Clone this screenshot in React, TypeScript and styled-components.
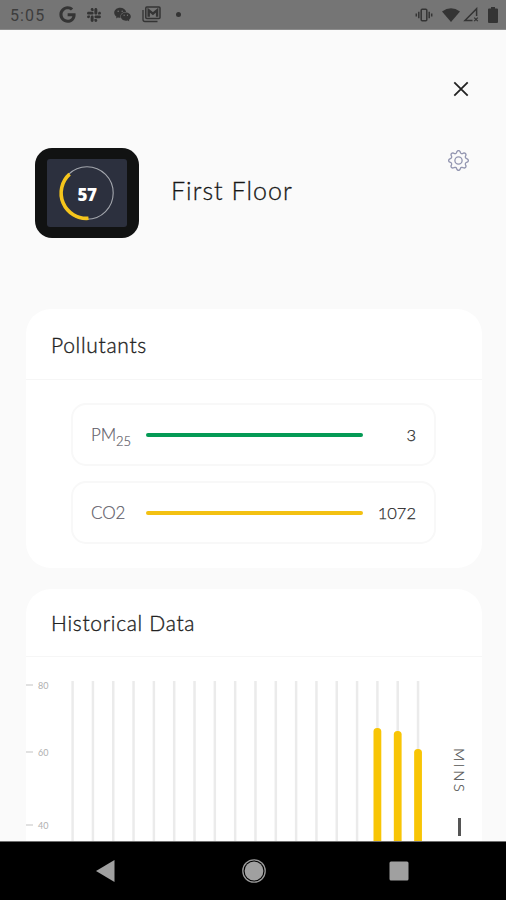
import React from "react";
import styled, { createGlobalStyle } from "styled-components";
import { FaGoogle, FaSlack } from "react-icons/fa";
import { AiFillWechat } from "react-icons/ai";
import { BsGear } from "react-icons/bs";

const GlobalStyle = createGlobalStyle`
  *, *::before, *::after { box-sizing: border-box; }
  body { margin: 0; background: #fafafa; font-family: Lato, "Open Sans", sans-serif; }
`;

const Screen = styled.div`
  width: 506px;
  height: 900px;
  display: flex;
  flex-direction: column;
  overflow: hidden;
  background: #fafafa;
`;

const StatusBar = styled.header`
  flex: none;
  height: 30px;
  padding: 0 8px 0 10px;
  display: flex;
  justify-content: space-between;
  align-items: center;
  background: #757575;
  border-bottom: 1px solid #8c8c8c;
  color: #343434;
`;

const StatusGroup = styled.div<{ $gap: number }>`
  display: flex;
  align-items: center;
  gap: ${(p) => p.$gap}px;
  svg { display: block; flex: none; }
`;

const Clock = styled.span`
  width: 36px;
  margin-right: 2px;
  padding-top: 2px;
  font: 400 16px/20px Roboto, sans-serif;
  letter-spacing: 1.1px;
  white-space: nowrap;
  color: #3d3d3d;
`;

const NoticeDot = styled.span`
  width: 5px;
  height: 5px;
  margin-left: 4px;
  border-radius: 50%;
  background: #343434;
`;

const Content = styled.main`
  flex: 1;
  min-height: 0;
  overflow: hidden;
  padding: 0 24px 0 26px;
  display: flex;
  flex-direction: column;
`;

const CloseRow = styled.div`
  flex: none;
  height: 118px;
  padding: 51px 13px 0 0;
  display: flex;
  justify-content: flex-end;
  align-items: flex-start;
`;

const IconButton = styled.button<{ $top?: number }>`
  display: block;
  margin-top: ${(p) => p.$top ?? 0}px;
  padding: 0;
  border: 0;
  background: none;
  color: #9295b0;
  svg { display: block; }
`;

const Profile = styled.section`
  flex: none;
  height: 161px;
  padding: 0 13px 0 9px;
  display: flex;
  align-items: flex-start;
`;

const Device = styled.div`
  width: 104px;
  height: 90px;
  padding: 11px 12px;
  border-radius: 17px;
  background: #111212;
`;

const DeviceScreen = styled.div`
  height: 68px;
  border-radius: 3px;
  background: #2c303e;
  display: grid;
  place-items: center;
  > * { grid-area: 1 / 1; }
  svg { display: block; }
`;

const Score = styled.strong`
  margin-top: 3px;
  font: 800 17px/20px "Open Sans", sans-serif;
  letter-spacing: -0.5px;
  color: #fff;
`;

const Title = styled.h1`
  flex: 1;
  margin: 25px 0 0 32px;
  font-size: 25px;
  line-height: 34px;
  font-weight: 300;
  letter-spacing: 1.05px;
  color: #171717;
  -webkit-text-stroke: 0.3px #171717;
`;

const Card = styled.section<{ $height: number }>`
  flex: none;
  height: ${(p) => p.$height}px;
  margin-bottom: 21px;
  border-radius: 25px;
  background: #fff;
`;

const CardHeader = styled.h2<{ $height: number; $top: number }>`
  height: ${(p) => p.$height}px;
  margin: 0;
  padding: ${(p) => p.$top}px 25px 0;
  border-bottom: 1px solid #f6f6f6;
  font-size: 21px;
  line-height: 28px;
  font-weight: 300;
  letter-spacing: 0.7px;
  color: #222;
  -webkit-text-stroke: 0.35px #222;
`;

const Readings = styled.div`
  padding: 23px 46px 0 45px;
  display: flex;
  flex-direction: column;
  gap: 15px;
`;

const Reading = styled.div`
  height: 63px;
  padding: 0 18px 0 18px;
  border: 2px solid #f8f8f8;
  border-radius: 15px;
  display: flex;
  align-items: center;
`;

const ReadingName = styled.span`
  width: 55px;
  font-size: 17px;
  line-height: 20px;
  font-weight: 300;
  letter-spacing: -0.1px;
  white-space: nowrap;
  color: #5f5d69;
  -webkit-text-stroke: 0.2px #5f5d69;
  sub { font-size: 13px; line-height: 0; vertical-align: -5px; letter-spacing: 0; }
`;

const Level = styled.span<{ $color: string }>`
  width: 217px;
  height: 4px;
  border-radius: 2px;
  background: ${(p) => p.$color};
`;

const Value = styled.span`
  flex: 1;
  text-align: right;
  font-size: 16.5px;
  line-height: 20px;
  font-weight: 300;
  color: #2c2c2c;
  -webkit-text-stroke: 0.25px #2c2c2c;
`;

const ChartArea = styled.div`
  height: 184px;
  display: flex;
`;

const Legend = styled.div`
  flex: 1;
  padding: 91px 0 0 27px;
  display: flex;
  flex-direction: column;
  align-items: flex-start;
  gap: 20px;
  span {
    height: 50px;
    writing-mode: vertical-rl;
    font-size: 14.5px;
    line-height: 16px;
    font-weight: 300;
    letter-spacing: 2.7px;
    color: #555;
    -webkit-text-stroke: 0.2px #555;
  }
  i { width: 3px; height: 18px; margin-left: 7px; background: #555; }
`;

const NavBar = styled.nav`
  flex: none;
  height: 59px;
  border-top: 1px solid #6f6f6f;
  background: #000;
  display: flex;
  align-items: center;
  padding-left: 96px;
  svg { display: block; }
`;

const NavSlot = styled.span<{ $gap?: number }>`
  margin-left: ${(p) => p.$gap ?? 0}px;
`;

const ticks = [
  { label: "80", y: 28 },
  { label: "60", y: 95 },
  { label: "40", y: 168 },
];
const barTops: Record<number, number> = { 15: 71, 16: 74, 17: 92 };

function HistoryChart() {
  return (
    <svg width="398" height="184" viewBox="0 0 398 184">
      {ticks.map((t) => (
        <g key={t.label}>
          <path d={`M0 ${t.y}h7`} stroke="#d5d5d5" strokeWidth="1.4" />
          <text x="12" y={t.y + 3.5} fontSize="9" fill="#b0b0b0" fontFamily="Lato, sans-serif">
            {t.label}
          </text>
        </g>
      ))}
      {Array.from({ length: 18 }, (_, i) => {
        const x = 46.6 + i * 20.32;
        const top = barTops[i];
        return (
          <g key={i}>
            <path d={`M${x} 24V184`} stroke="#ebebeb" strokeWidth="2.5" />
            {top !== undefined && (
              <rect x={x - 3.9} y={top} width="7.8" height="130" rx="3.6" fill="#f8c505" />
            )}
          </g>
        );
      })}
    </svg>
  );
}

function MailIcon() {
  return (
    <svg width="19" height="17" viewBox="0 0 19 17" fill="none" stroke="currentColor">
      <path d="M1 4v9.5c0 1.2.8 2 2 2h12.5" strokeWidth="1.3" />
      <rect x="3.8" y="1" width="14.2" height="11.5" rx="1" strokeWidth="1.5" />
      <path d="M6.7 10.8V4.2l4.2 3.5 4.2-3.5v6.6" strokeWidth="2.4" />
    </svg>
  );
}

function VibrateIcon() {
  return (
    <svg width="18" height="14" viewBox="0 0 18 14" fill="none" stroke="currentColor">
      <rect x="6.2" y="1.2" width="5.6" height="11.6" rx="1" strokeWidth="1.5" />
      <path d="M3.8 3.8v6.4M14.2 3.8v6.4M1.3 5.6v2.8M16.7 5.6v2.8" strokeWidth="1.5" />
    </svg>
  );
}

export default function App() {
  return (
    <>
      <GlobalStyle />
      <Screen>
        <StatusBar>
          <StatusGroup $gap={10.5}>
            <Clock>5:05</Clock>
            <FaGoogle size={17} />
            <FaSlack size={16} />
            <AiFillWechat size={19} />
            <MailIcon />
            <NoticeDot />
          </StatusGroup>
          <StatusGroup $gap={9}>
            <VibrateIcon />
            <StatusGroup $gap={3}>
              <svg width="18" height="14" viewBox="0 0 18 14" fill="currentColor">
                <path d="M0 3.5Q9-3.1 18 3.5L9 14Z" />
              </svg>
              <svg width="16" height="15" viewBox="0 0 16 15" fill="none" stroke="currentColor">
                <path d="M9.5 13.4H2L13.6 1.7v7.2" strokeWidth="1.5" />
                <path d="M11.2 10.6l3.6 3.6m0-3.6l-3.6 3.6" strokeWidth="1.2" />
              </svg>
            </StatusGroup>
            <svg width="10" height="16" viewBox="0 0 10 16" fill="currentColor">
              <path d="M3 0h4v1.6h2q1 0 1 1V15q0 1-1 1H1q-1 0-1-1V2.6q0-1 1-1h2z" />
            </svg>
          </StatusGroup>
        </StatusBar>
        <Content>
          <CloseRow>
            <IconButton aria-label="Close">
              <svg width="16" height="16" viewBox="0 0 16 16">
                <path d="M1.3 1.3l13.4 13.4m0-13.4L1.3 14.7" stroke="#222" strokeWidth="1.8" />
              </svg>
            </IconButton>
          </CloseRow>
          <Profile>
            <Device>
              <DeviceScreen>
                <svg width="58" height="58" viewBox="0 0 58 58" fill="none">
                  <circle cx="29" cy="29" r="26.2" stroke="#a3a6ad" strokeWidth="1.1" />
                  <path d="M11.6 10.2A25.3 25.3 0 0 0 30.5 54.3" stroke="#f5c51c" strokeWidth="3.6" />
                </svg>
                <Score>57</Score>
              </DeviceScreen>
            </Device>
            <Title>First Floor</Title>
            <IconButton aria-label="Settings" $top={2}>
              <BsGear size={21} />
            </IconButton>
          </Profile>
          <Card $height={259}>
            <CardHeader $height={71} $top={22}>Pollutants</CardHeader>
            <Readings>
              <Reading>
                <ReadingName>
                  PM<sub>25</sub>
                </ReadingName>
                <Level $color="#049a55" />
                <Value>3</Value>
              </Reading>
              <Reading>
                <ReadingName>CO2</ReadingName>
                <Level $color="#f3c112" />
                <Value>1072</Value>
              </Reading>
            </Readings>
          </Card>
          <Card $height={300}>
            <CardHeader $height={68} $top={20}>Historical Data</CardHeader>
            <ChartArea>
              <HistoryChart />
              <Legend>
                <span>MINS</span>
                <i />
              </Legend>
            </ChartArea>
          </Card>
        </Content>
        <NavBar>
          <NavSlot>
            <svg width="19" height="22" viewBox="0 0 19 22">
              <path d="M0 11L18.5 0v22z" fill="#a0a0a0" />
            </svg>
          </NavSlot>
          <NavSlot $gap={127}>
            <svg width="24" height="24" viewBox="0 0 24 24">
              <circle cx="12" cy="12" r="11.2" fill="none" stroke="#999" strokeWidth="1.3" />
              <circle cx="12" cy="12" r="9.4" fill="#a0a0a0" />
            </svg>
          </NavSlot>
          <NavSlot $gap={123}>
            <svg width="20" height="20" viewBox="0 0 20 20">
              <rect x="0.5" y="0.5" width="19" height="19" rx="1.5" fill="#a0a0a0" />
            </svg>
          </NavSlot>
        </NavBar>
      </Screen>
    </>
  );
}
